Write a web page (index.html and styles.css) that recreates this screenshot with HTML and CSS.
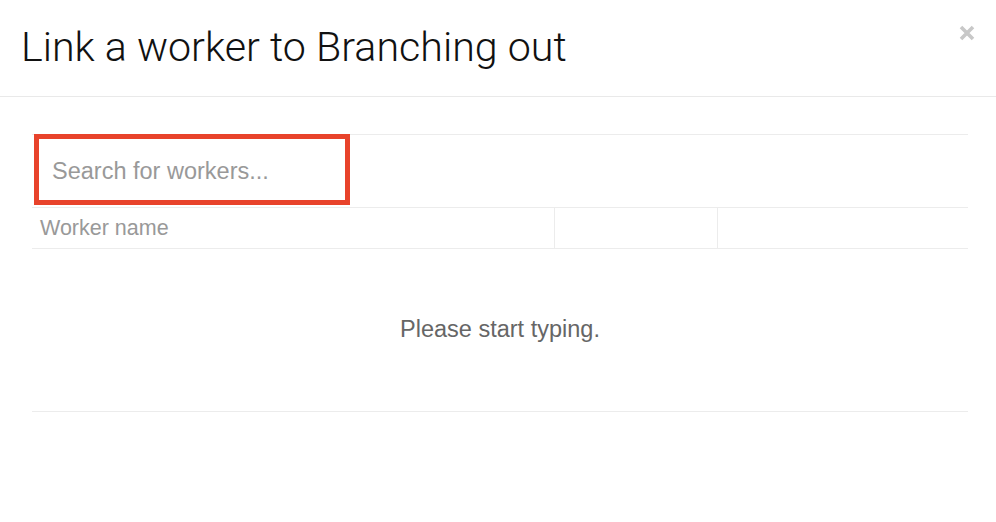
FILE: index.html
```html
<!DOCTYPE html>
<html lang="en">
<head>
    <meta charset="UTF-8">
    <title>Link a worker</title>
    <link rel="stylesheet" href="styles.css">
</head>
<body>
    <div class="modal">
        <div class="modal-header">
            <h1 class="modal-title">Link a worker to Branching out</h1>
            <button class="close" aria-label="Close">
                <svg width="16" height="18" viewBox="0 0 16 18">
                    <path d="M2 3 L14 15 M14 3 L2 15" stroke="currentColor" stroke-width="3.6" fill="none"/>
                </svg>
            </button>
        </div>
        <div class="modal-body">
            <div class="search-row">
                <input type="text" class="search" placeholder="Search for workers...">
            </div>
            <div class="table-head">
                <div class="th">Worker name</div>
                <div class="th"></div>
                <div class="th"></div>
            </div>
            <div class="empty">Please start typing.</div>
        </div>
    </div>
</body>
</html>
```

FILE: styles.css
```css
body {
    margin: 0;
    background-color: #fff;
    font-family: 'Liberation Sans', Arial, sans-serif;
    color: #333;
}

.modal-header {
    display: flex;
    justify-content: space-between;
    align-items: flex-start;
    height: 96px;
    padding: 0 21px 0 21px;
    border-bottom: 1px solid #e9e9e9;
}

.modal-title {
    margin: 0;
    padding-top: 23px;
    font-family: 'Roboto', 'Liberation Sans', sans-serif;
    font-weight: 300;
    font-size: 41.2px;
    line-height: 48px;
    color: #111;
}

.close {
    margin-top: 24px;
    padding: 0;
    border: 0;
    background: none;
    color: #c8c8c8;
    cursor: pointer;
}

.close svg {
    display: block;
}

.modal-body {
    padding: 37px 28px 0 32px;
}

.search-row {
    border-top: 1px solid #ececec;
    padding: 0 0 2px 2px;
}

.search {
    display: block;
    box-sizing: border-box;
    width: 316px;
    height: 71px;
    margin-top: -1px;
    padding: 3px 0 0 13px;
    border: 5px solid #e8432b;
    outline: none;
    font-family: 'Liberation Sans', Arial, sans-serif;
    font-size: 23.5px;
    color: #555;
}

.search::placeholder {
    color: #999;
}

.table-head {
    display: grid;
    grid-template-columns: 522px 163px 1fr;
    border-top: 1px solid #ececec;
    border-bottom: 1px solid #ececec;
}

.th {
    height: 40px;
    padding-left: 8px;
    font-size: 21.5px;
    line-height: 40px;
    color: #999;
}

.th + .th {
    border-left: 1px solid #ececec;
}

.empty {
    height: 162px;
    border-bottom: 1px solid #ececec;
    font-size: 23.5px;
    line-height: 160px;
    text-align: center;
    color: #666;
}
```
